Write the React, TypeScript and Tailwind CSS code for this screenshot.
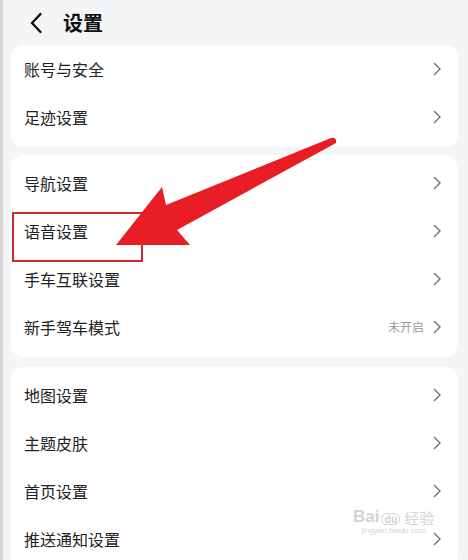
import React from "react";

type Row = { label: string; value?: string };

const groups: Row[][] = [
  [{ label: "账号与安全" }, { label: "足迹设置" }],
  [
    { label: "导航设置" },
    { label: "语音设置" },
    { label: "手车互联设置" },
    { label: "新手驾车模式", value: "未开启" },
  ],
  [
    { label: "地图设置" },
    { label: "主题皮肤" },
    { label: "首页设置" },
    { label: "推送通知设置" },
  ],
];

function Chevron() {
  return (
    <svg width="9" height="14" viewBox="0 0 9 14" fill="none">
      <path d="M1.5 1.5L7 7l-5.5 5.5" stroke="#6f6f6f" strokeWidth="1.4" strokeLinecap="round" strokeLinejoin="round" />
    </svg>
  );
}

function SettingRow({ row }: { row: Row }) {
  return (
    <div className="flex h-12 items-center justify-between pl-[13px] pr-[16px]">
      <span className="text-[16px] text-[#222]">{row.label}</span>
      <div className="flex items-center gap-[9px]">
        {row.value && <span className="text-[12px] text-[#9a9a9a]">{row.value}</span>}
        <Chevron />
      </div>
    </div>
  );
}

export default function App() {
  return (
    <div
      className="relative h-[560px] w-[468px] overflow-hidden border-l-[3px] border-[#d6d6d6] bg-[#f4f5f7]"
      style={{ fontFamily: '"Noto Sans CJK SC", "Noto Sans", sans-serif' }}
    >
      {/* header */}
      <div className="flex h-[45px] items-center pl-[26px]">
        <svg width="14" height="22" viewBox="0 0 14 22" fill="none">
          <path d="M11.5 2L3 11l8.5 9" stroke="#111" strokeWidth="2.4" strokeLinecap="round" strokeLinejoin="round" />
        </svg>
        <h1 className="ml-[20px] text-[20px] font-bold leading-none text-[#111]">设置</h1>
      </div>

      <div className="ml-[8px] mr-[10px] flex flex-col">
        <div className="rounded-[12px] bg-white pb-[6px]">
          {groups[0].map((r) => (
            <SettingRow key={r.label} row={r} />
          ))}
        </div>
        <div className="mt-2 rounded-[12px] bg-white py-1 pb-[6px]">
          {groups[1].map((r) => (
            <SettingRow key={r.label} row={r} />
          ))}
        </div>
        <div className="mt-[10px] rounded-[12px] bg-white py-1">
          {groups[2].map((r) => (
            <SettingRow key={r.label} row={r} />
          ))}
        </div>
      </div>

      {/* annotation box */}
      <div className="absolute left-[9px] top-[212px] h-[50px] w-[131px] border-2 border-[#c92b35]" />

      {/* annotation arrow */}
      <svg className="absolute left-0 top-0" width="468" height="560" viewBox="0 0 468 560">
        <path
          d="M113 245 L159 187 L163 205 L328 138 Q334 137 333 143 L174 230 L187 245 Z"
          fill="#e91d26"
        />
      </svg>

      {/* watermark */}
      <div className="absolute left-[350px] top-[508px] flex flex-col items-center text-[#d4d4d4]">
        <div className="flex items-end gap-[2px] leading-none">
          <span className="text-[17px] font-bold" style={{ fontFamily: '"Liberation Sans", sans-serif' }}>
            Bai
          </span>
          <span className="rounded-full border border-[#d4d4d4] px-[2px] text-[10px] font-bold">du</span>
          <span className="ml-[2px] text-[15px]">经验</span>
        </div>
        <span className="mt-[2px] text-[8px] leading-none" style={{ fontFamily: '"Liberation Sans", sans-serif' }}>
          jingyan.baidu.com
        </span>
      </div>
    </div>
  );
}
